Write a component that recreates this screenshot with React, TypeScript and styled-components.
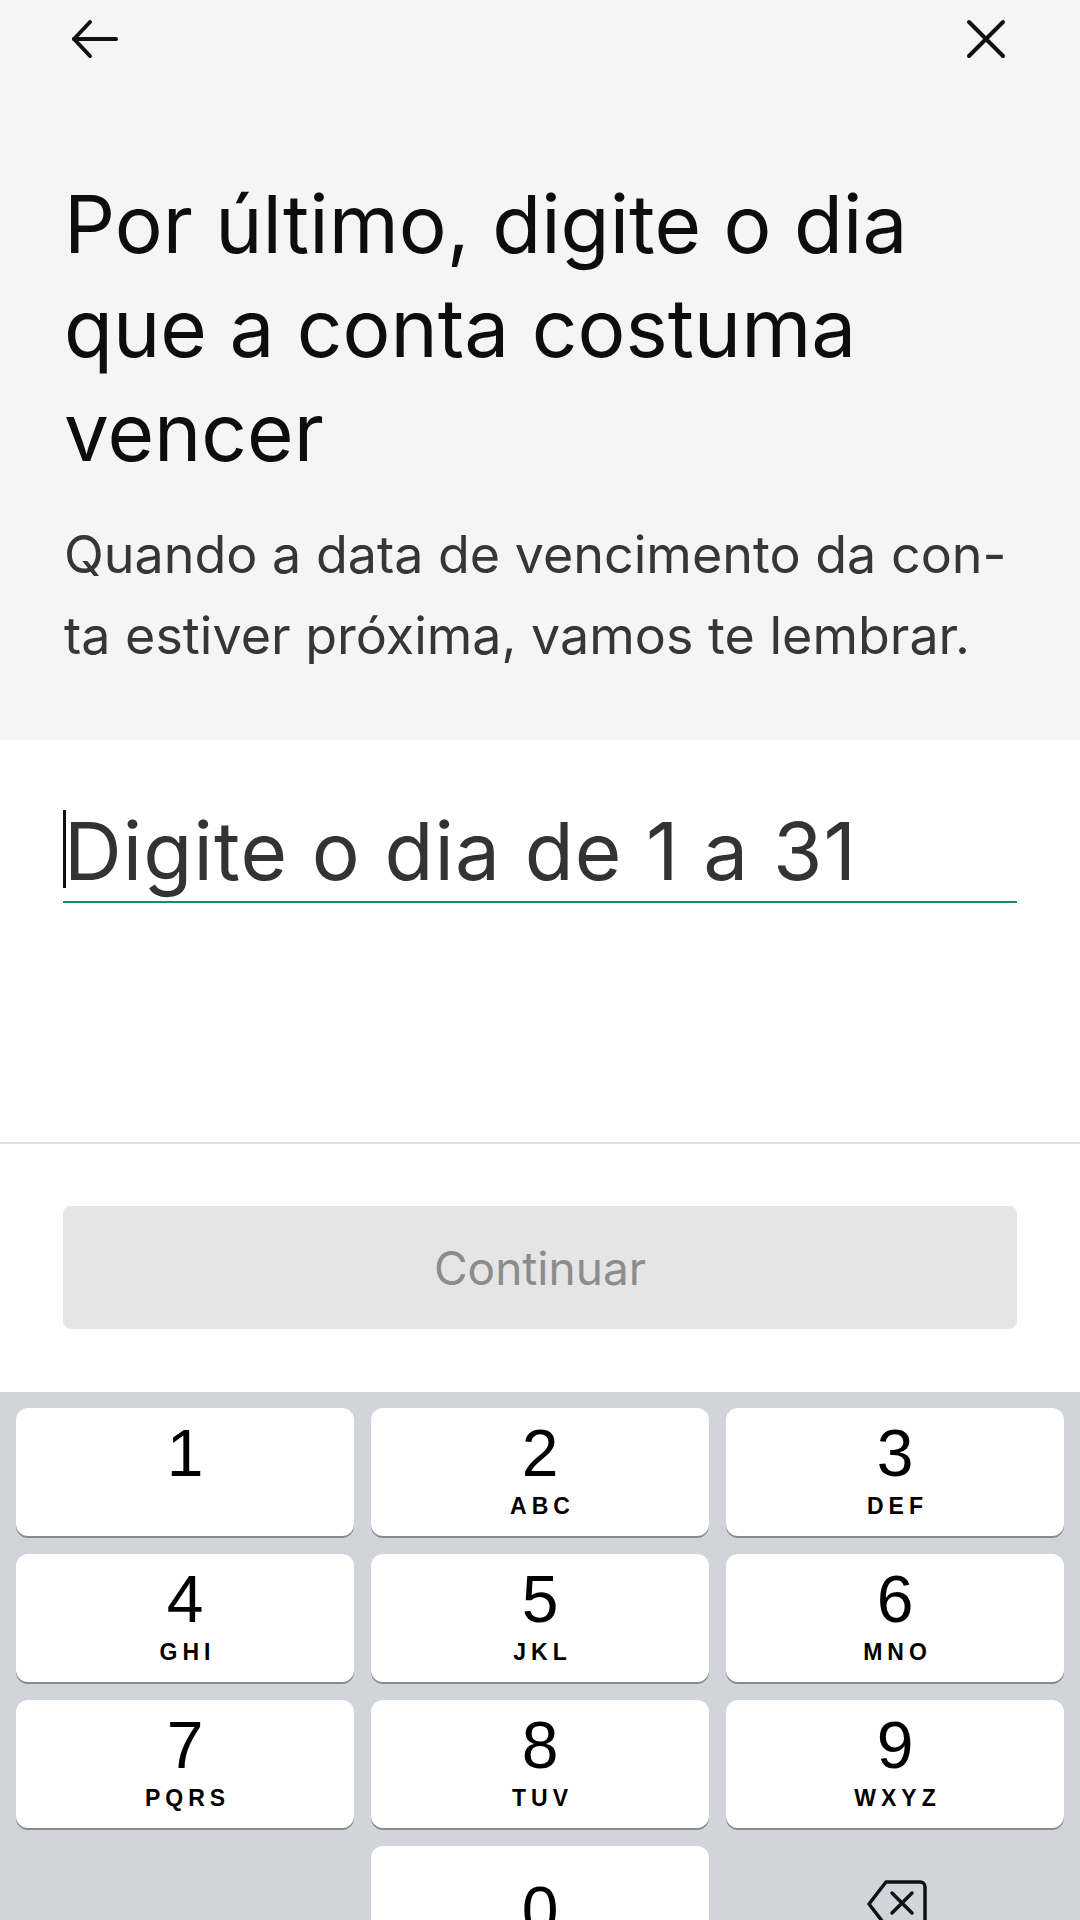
import React from 'react';
import styled, { createGlobalStyle } from 'styled-components';

const GlobalStyle = createGlobalStyle`
  html, body {
    margin: 0;
    padding: 0;
    background: #ffffff;
  }
  * {
    box-sizing: border-box;
  }
`;

const keys = [
  { digit: '1', letters: '' },
  { digit: '2', letters: 'ABC' },
  { digit: '3', letters: 'DEF' },
  { digit: '4', letters: 'GHI' },
  { digit: '5', letters: 'JKL' },
  { digit: '6', letters: 'MNO' },
  { digit: '7', letters: 'PQRS' },
  { digit: '8', letters: 'TUV' },
  { digit: '9', letters: 'WXYZ' },
];

const BackIcon = () => (
  <svg width="48" height="40" viewBox="0 0 48 40" fill="none">
    <path d="M4 20H46" stroke="#111" strokeWidth="4" strokeLinecap="round" />
    <path d="M20 3L4 20L20 37" stroke="#111" strokeWidth="4" strokeLinecap="round" strokeLinejoin="round" />
  </svg>
);

const CloseIcon = () => (
  <svg width="40" height="40" viewBox="0 0 40 40" fill="none">
    <path d="M3 3L37 37M37 3L3 37" stroke="#111" strokeWidth="4" strokeLinecap="round" />
  </svg>
);

const DeleteIcon = () => (
  <svg width="62" height="48" viewBox="0 0 62 48" fill="none">
    <path
      d="M20 2H54C57 2 59 4 59 7V41C59 44 57 46 54 46H20L3 24Z"
      stroke="#111"
      strokeWidth="3.5"
      strokeLinejoin="round"
    />
    <path d="M26 13L46 33M46 13L26 33" stroke="#111" strokeWidth="3.5" strokeLinecap="round" />
  </svg>
);

const App: React.FC = () => {
  return (
    <Screen>
      <GlobalStyle />
      <Header>
        <TopBar>
          <IconButton aria-label="Voltar">
            <BackIcon />
          </IconButton>
          <IconButton aria-label="Fechar">
            <CloseIcon />
          </IconButton>
        </TopBar>
        <Title>
          Por último, digite o dia
          <br />
          que a conta costuma
          <br />
          vencer
        </Title>
        <Subtitle>
          Quando a data de vencimento da con-
          <br />
          ta estiver próxima, vamos te lembrar.
        </Subtitle>
      </Header>

      <Body>
        <Field>
          <Caret />
          <Placeholder>Digite o dia de 1 a 31</Placeholder>
        </Field>
      </Body>

      <Footer>
        <ContinueButton disabled>Continuar</ContinueButton>
      </Footer>

      <Keypad>
        {keys.map((key) => (
          <Key key={key.digit}>
            <Digit>{key.digit}</Digit>
            <Letters>{key.letters}</Letters>
          </Key>
        ))}
        <EmptyCell />
        <Key $single>
          <Digit>0</Digit>
        </Key>
        <DeleteCell>
          <DeleteIcon />
        </DeleteCell>
      </Keypad>
    </Screen>
  );
};

const Screen = styled.div`
  width: 1080px;
  height: 1920px;
  display: flex;
  flex-direction: column;
  overflow: hidden;
  background: #ffffff;
  font-family: Inter, 'Noto Sans', sans-serif;
`;

const Header = styled.header`
  background: #f5f5f5;
  padding: 0 64px 64px;
`;

const TopBar = styled.div`
  height: 78px;
  display: flex;
  align-items: center;
  justify-content: space-between;
  margin: 0 2px;
`;

const IconButton = styled.button`
  width: 56px;
  height: 56px;
  display: flex;
  align-items: center;
  justify-content: center;
  padding: 0;
  border: none;
  background: transparent;
`;

const Title = styled.h1`
  margin: 94px 0 0;
  font-size: 80px;
  line-height: 104px;
  font-weight: 400;
  letter-spacing: 0;
  color: #0d0d0d;
`;

const Subtitle = styled.p`
  margin: 30px 0 0;
  font-size: 52px;
  line-height: 81px;
  font-weight: 400;
  color: #363636;
  white-space: nowrap;
`;

const Body = styled.main`
  flex: 1;
  padding: 65px 63px 0;
`;

const Field = styled.div`
  position: relative;
  height: 98px;
  border-bottom: 2px solid #1f8a5b;
  display: flex;
  align-items: flex-start;
`;

const Caret = styled.span`
  position: absolute;
  left: 0;
  top: 5px;
  width: 3px;
  height: 78px;
  background: #111111;
`;

const Placeholder = styled.span`
  font-size: 80px;
  line-height: 92px;
  color: #333333;
  letter-spacing: 1.1px;
  padding-left: 1px;
`;

const Footer = styled.footer`
  border-top: 2px solid #e0e0e0;
  padding: 62px 63px 63px;
`;

const ContinueButton = styled.button`
  width: 100%;
  height: 123px;
  border: none;
  border-radius: 8px;
  background: #e5e5e5;
  color: #8c8c8c;
  font-family: Inter, 'Noto Sans', sans-serif;
  font-size: 46px;
  font-weight: 400;
`;

const Keypad = styled.div`
  flex: none;
  height: 528px;
  background: #d1d4db;
  padding: 16px 16px 0;
  display: grid;
  grid-template-columns: repeat(3, 1fr);
  grid-auto-rows: 128px;
  column-gap: 17px;
  row-gap: 18px;
  overflow: hidden;
`;

const Key = styled.div<{ $single?: boolean }>`
  background: #ffffff;
  border-radius: 12px;
  box-shadow: 0 2px 0 #898a8d;
  display: flex;
  flex-direction: column;
  align-items: center;
  justify-content: ${(p) => (p.$single ? 'center' : 'flex-start')};
  padding-top: ${(p) => (p.$single ? '0' : '10px')};
  font-family: 'Liberation Sans', Arial, sans-serif;
  color: #000000;
`;

const Digit = styled.span`
  font-size: 66px;
  line-height: 70px;
`;

const Letters = styled.span`
  font-size: 23px;
  line-height: 28px;
  font-weight: 700;
  letter-spacing: 5px;
  margin-right: -5px;
  height: 28px;
  margin-top: 4px;
`;

const EmptyCell = styled.div``;

const DeleteCell = styled.div`
  display: flex;
  justify-content: center;
  align-items: flex-start;
  padding-top: 34px;
  padding-left: 4px;
`;

export default App;
